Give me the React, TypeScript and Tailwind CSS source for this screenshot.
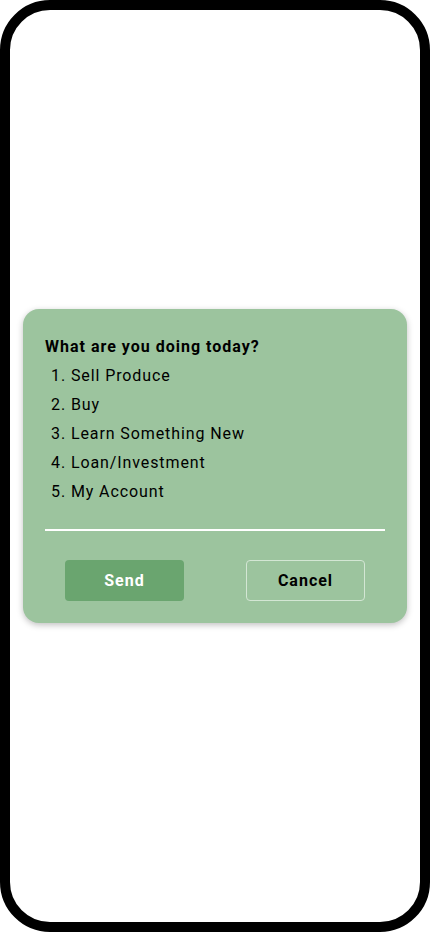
import React from "react";

export default function App() {
  const items = ["Sell Produce", "Buy", "Learn Something New", "Loan/Investment", "My Account"];
  return (
    <div className="w-[430px] h-[932px] bg-white">
      <div
        className="w-[430px] h-[932px] rounded-[50px] border-[10px] border-black bg-white flex flex-col justify-center px-[13px]"
        style={{ fontFamily: "Roboto, 'Noto Sans', sans-serif" }}
      >
        <div className="mt-[0px] bg-[#9cc49e] rounded-[16px] shadow-[0_2px_6px_rgba(0,0,0,0.25)] pt-[26px] pb-[22px] px-[22px]">
          <div className="text-[16px] leading-[24px] font-bold tracking-[1px] text-black">What are you doing today?</div>
          <ol className="mt-[2.5px] pl-[6px]">
            {items.map((t, i) => (
              <li key={t} className="text-[16px] leading-[29px] tracking-[0.9px] text-black">
                {i + 1}. {t}
              </li>
            ))}
          </ol>
          <div className="mt-[23px] h-[2px] bg-white" />
          <div className="mt-[29px] flex justify-between px-[20px]">
            <button className="w-[119px] h-[41px] rounded-[4px] bg-[#6aa56f] text-white text-[16px] font-bold tracking-[1px]">
              Send
            </button>
            <button className="w-[119px] h-[41px] rounded-[4px] border border-[#d3e6d4] text-black text-[16px] font-bold tracking-[1px]">
              Cancel
            </button>
          </div>
        </div>
      </div>
    </div>
  );
}
